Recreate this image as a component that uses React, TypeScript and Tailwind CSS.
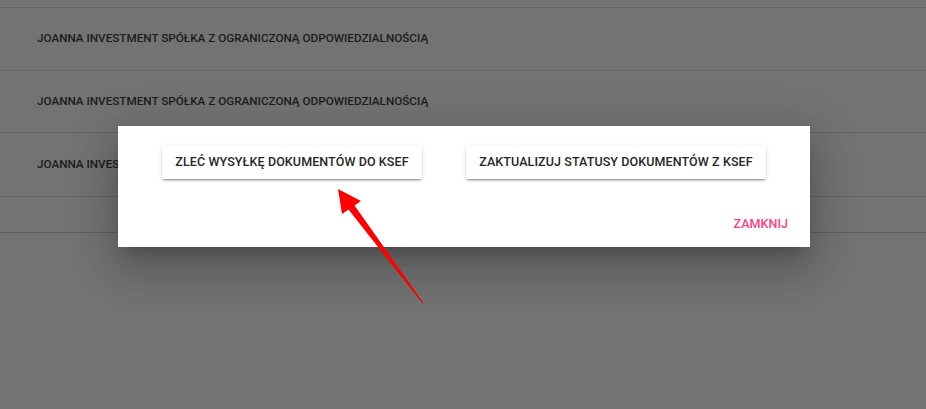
export default function App() {
  const name = "JOANNA INVESTMENT SPÓŁKA Z OGRANICZONĄ ODPOWIEDZIALNOŚCIĄ";
  const rows = ["h-[63px]", "h-[62px]", "h-[64px]"];
  return (
    <div
      className="relative h-[409px] w-full overflow-hidden bg-[#737373]"
      style={{ fontFamily: "Roboto, 'Liberation Sans', sans-serif" }}
    >
      {/* dimmed table behind the dialog */}
      <div className="flex flex-col">
        <div className="h-[8px] border-b border-[#636363]" />
        {rows.map((h, i) => (
          <div
            key={i}
            className={`${h} flex items-center border-b border-[#636363] pl-[37px] text-[11.7px] font-medium text-[#1c1c1c]`}
          >
            {name}
          </div>
        ))}
        <div className="h-[36px] border-b border-[#5e5e5e]" />
      </div>

      {/* dialog */}
      <div className="absolute inset-0 flex justify-center pl-[2px] pt-[126px]">
        <div className="flex h-[121px] w-[692px] flex-col bg-white shadow-[0_11px_15px_-7px_rgba(0,0,0,0.2),0_24px_38px_3px_rgba(0,0,0,0.14),0_9px_46px_8px_rgba(0,0,0,0.12)]">
          <div className="flex justify-center gap-[44px] pt-[20px]">
            <button className="h-[33px] w-[260px] rounded-[2px] bg-white text-[12.5px] font-medium tracking-[0.1px] text-[#262626] shadow-[0_3px_1px_-2px_rgba(0,0,0,0.2),0_2px_2px_0_rgba(0,0,0,0.14),0_1px_5px_0_rgba(0,0,0,0.12)]">
              ZLEĆ WYSYŁKĘ DOKUMENTÓW DO KSEF
            </button>
            <button className="h-[33px] w-[300px] rounded-[2px] bg-white text-[12.5px] font-medium tracking-[0.1px] text-[#262626] shadow-[0_3px_1px_-2px_rgba(0,0,0,0.2),0_2px_2px_0_rgba(0,0,0,0.14),0_1px_5px_0_rgba(0,0,0,0.12)]">
              ZAKTUALIZUJ STATUSY DOKUMENTÓW Z KSEF
            </button>
          </div>
          <div className="mt-auto flex justify-end pb-[13px] pr-[22px]">
            <span className="text-[12.6px] font-medium text-[#ff4081]">ZAMKNIJ</span>
          </div>
        </div>
      </div>

      {/* annotation arrow */}
      <svg className="absolute left-0 top-0" width="926" height="409" viewBox="0 0 926 409">
        <polygon
          points="338,189 361,201 354.5,205.5 423.5,303 422.5,303.5 348.5,209.5 342,214"
          fill="#ff0000"
        />
      </svg>
    </div>
  );
}
